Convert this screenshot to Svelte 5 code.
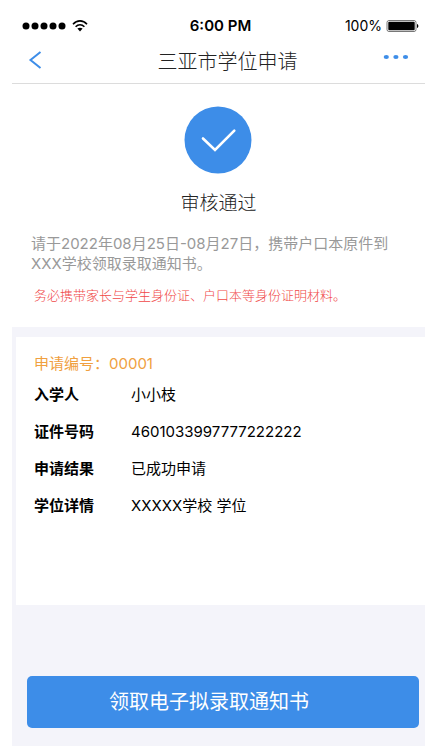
<script lang="ts">
	interface applyRow {
		label: string;
		value: string;
	}

	let applyNo = '00001';

	let rows: applyRow[] = [
		{ label: '入学人', value: '小小枝' },
		{ label: '证件号码', value: '4601033997777222222' },
		{ label: '申请结果', value: '已成功申请' },
		{ label: '学位详情', value: 'XXXXX学校 学位' }
	];
</script>

<main>
	<div class="status-bar">
		<div class="signal">
			<svg width="44" height="8" viewBox="0 0 44 8" aria-hidden="true">
				{#each [0, 1, 2, 3, 4] as i}
					<circle cx={4 + i * 9} cy="4" r="3.5" />
				{/each}
			</svg>
			<svg width="16" height="12" viewBox="0 0 16 12" aria-hidden="true">
				<g fill="none" stroke="#000" stroke-width="1.6">
					<path d="M1 4.2C5-.2 11-.2 15 4.2" />
					<path d="M3.6 6.8c2.6-2.7 6.2-2.7 8.8 0" />
				</g>
				<path d="M5.4 8.6c1.6-1.3 3.6-1.3 5.2 0L8 11.4z" />
			</svg>
		</div>
		<div class="time">6:00 PM</div>
		<div class="battery">
			<span>100%</span>
			<svg width="33" height="12" viewBox="0 0 33 12" aria-hidden="true">
				<rect x="1" y=".5" width="29" height="11" rx="2" fill="#fff" stroke="#777" />
				<rect x="2.3" y="1.7" width="26.4" height="8.6" rx="1" />
				<path d="M31 4c1.8.4 1.8 3.6 0 4z" />
			</svg>
		</div>
	</div>

	<header>
		<button class="icon-btn back" aria-label="返回">
			<svg width="14" height="18" viewBox="0 0 14 18">
				<path d="M12.5 1L2.5 9l10 8" fill="none" stroke="#3d8de8" stroke-width="2" />
			</svg>
		</button>
		<h1>三亚市学位申请</h1>
		<button class="icon-btn more" aria-label="更多">
			<svg width="26" height="6" viewBox="0 0 26 6" fill="#3d8de8">
				<ellipse cx="3.3" cy="3" rx="2.6" ry="2.1" />
				<ellipse cx="12.9" cy="3" rx="2.6" ry="2.1" />
				<ellipse cx="22.5" cy="3" rx="2.6" ry="2.1" />
			</svg>
		</button>
	</header>

	<section class="result">
		<svg width="69" height="68" viewBox="0 0 69 68" aria-hidden="true">
			<circle cx="34" cy="34" r="33.5" fill="#3d8de8" />
			<path d="M19 32.5L31 44 50.3 24.7" fill="none" stroke="#fff" stroke-width="2.6" stroke-linecap="round" />
		</svg>
		<h2>审核通过</h2>
		<p class="desc">请于2022年08月25日-08月27日，携带户口本原件到XXX学校领取录取通知书。</p>
		<p class="warn">务必携带家长与学生身份证、户口本等身份证明材料。</p>
	</section>

	<section class="card">
		<div class="apply-no">申请编号：{applyNo}</div>
		<dl>
			{#each rows as { label, value }}
				<div class="row">
					<dt>{label}</dt>
					<dd>{value}</dd>
				</div>
			{/each}
		</dl>
	</section>

	<div class="footer">
		<button class="submit">领取电子拟录取通知书</button>
	</div>
</main>

<style>
	:global(body) {
		background: #fff;
	}

	main {
		margin: 0 11px 0 12px;
		background: #f4f4fa;
		color: #000;
		font-family: Inter, 'Noto Sans CJK SC', sans-serif;
		font-size: 15px;
		line-height: 20px;
	}

	h1,
	h2,
	p,
	dl,
	dd {
		margin: 0;
	}

	button {
		border: none;
		font-family: inherit;
		cursor: pointer;
	}

	.status-bar {
		display: grid;
		grid-template-columns: 1fr auto 1fr;
		align-items: center;
		padding: 16px 6px 0 10px;
		background: #fff;

		& .signal {
			display: flex;
			align-items: center;
			gap: 6px;
		}

		& .time {
			font-size: 15px;
			font-weight: 600;
		}

		& .battery {
			display: flex;
			align-items: center;
			justify-content: flex-end;
			gap: 4px;
			font-size: 14px;
		}
	}

	header {
		display: flex;
		align-items: center;
		justify-content: space-between;
		height: 47px;
		padding: 0 16px;
		border-bottom: 1px solid #dcdcdc;
		background: #fff;

		& h1 {
			padding-top: 4px;
			font-size: 20px;
			font-weight: 300;
			color: #222;
		}

		& .icon-btn {
			display: flex;
			padding: 0;
			background: none;
		}

		& .back {
			width: 44px;
		}

		& .more {
			width: 26px;
			padding-bottom: 6px;
		}
	}

	.result {
		display: flex;
		flex-direction: column;
		align-items: center;
		padding: 22px 19px;
		background: #fff;

		& h2 {
			margin-top: 20px;
			font-size: 19px;
			font-weight: 300;
			color: #222;
		}

		& .desc {
			align-self: stretch;
			margin-top: 20px;
			color: #999;
		}

		& .warn {
			align-self: stretch;
			margin-top: 11px;
			padding-left: 3px;
			font-size: 13px;
			font-weight: 300;
			color: #f04848;
		}
	}

	.card {
		min-height: 251px;
		margin: 10px 0 0 4px;
		padding: 17px 18px 0;
		background: #fff;

		& .apply-no {
			color: #f0a040;
		}

		& dl {
			display: flex;
			flex-direction: column;
			gap: 17px;
			margin-top: 11px;
		}

		& .row {
			display: flex;
		}

		& dt {
			width: 97px;
			font-weight: 700;
		}
	}

	.footer {
		padding: 71px 6px 18px 15px;
	}

	.submit {
		display: block;
		width: 100%;
		height: 52px;
		padding: 0 28px 4px 0;
		border-radius: 5px;
		background: #3d8de8;
		color: #fff;
		font-size: 20px;
	}
</style>
